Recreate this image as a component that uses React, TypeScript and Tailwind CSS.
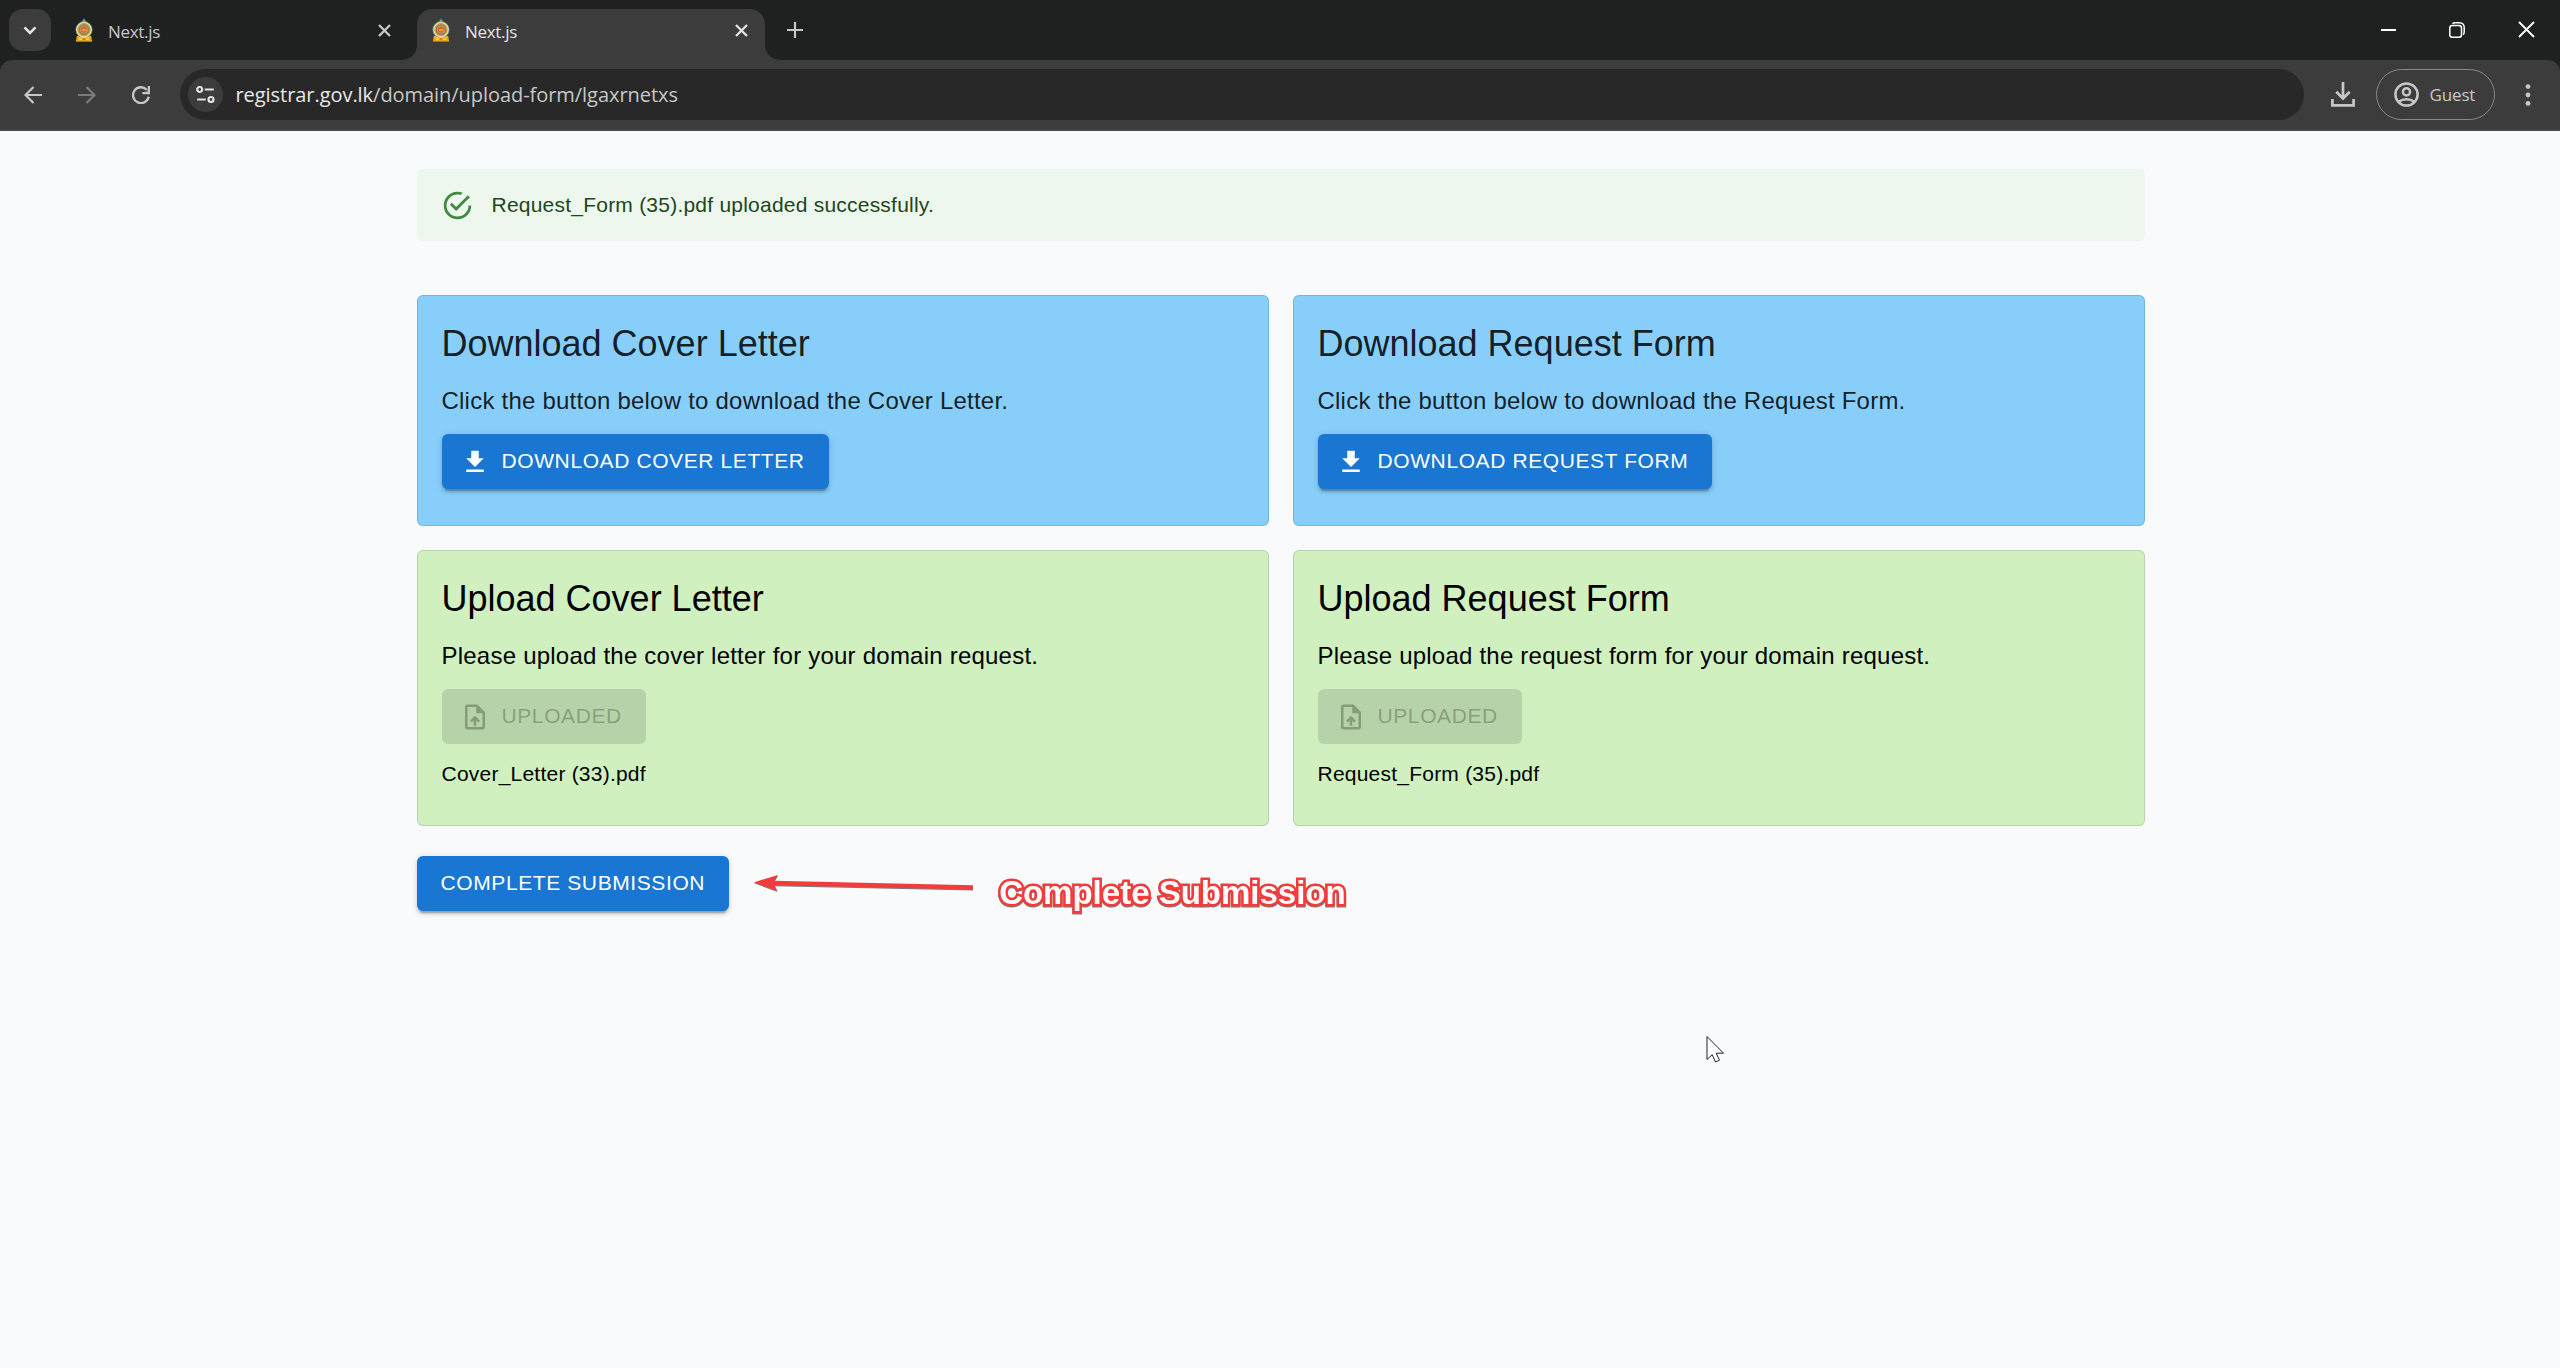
import type { ReactNode } from "react";

function Emblem() {
  return (
    <svg className="h-6 w-[18px] shrink-0" viewBox="0 0 18 24">
      <path d="M9 0.200c1.400 1 2.200 2.200 2.200 4.600H6.800c0-2.400.8-3.600 2.200-4.600z" fill="#3f7472" />
      <rect x="8.200" y="2" width="1.600" height="2" fill="#b9ad62" />
      <path d="M1.800 18h14.400l1 6H.8z" fill="#eda514" />
      <path d="M1 23.500h16" stroke="#5f8480" strokeWidth="1" />
      <circle cx="9" cy="11.700" r="8.200" fill="#ecdfae" stroke="#4f8a8a" strokeWidth="0.700" />
      <circle cx="9" cy="11.700" r="6" fill="#8d8446" stroke="#c9a13a" strokeWidth="1.200" />
      <circle cx="9" cy="11.700" r="3.700" fill="#df5a41" stroke="#b9a58c" strokeWidth="0.800" />
      <path d="M7.200 12.800v-2l1 .5 1-.9.5.9h1.800v2.300h-.9v-1h-1.800v1z" fill="#f2b01e" />
      <path d="M3 19.300l3 .8 3-.8 3 .8 3-.8M4 21.500h3M11 21.500h3" stroke="#f9d879" strokeWidth="0.900" fill="none" />
      <path d="M7.700 20.500h2.600v1.500H7.700z" fill="#d9771e" />
    </svg>
  );
}

function Cross({ color, size, width }: { color: string; size: number; width: number }) {
  return (
    <svg width={size} height={size} viewBox={`0 0 ${size} ${size}`} className="shrink-0">
      <path
        d={`M1 1L${size - 1} ${size - 1}M${size - 1} 1L1 ${size - 1}`}
        stroke={color}
        strokeWidth={width}
        fill="none"
      />
    </svg>
  );
}

function TabStrip() {
  return (
    <div className="flex h-[60px] items-end bg-[#1f2120] font-['Open_Sans',sans-serif]">
      <div className="flex h-[60px] w-[417px] items-center pl-[9px]">
        <div className="flex size-[42px] items-center justify-center rounded-[14px] bg-[#3c3c3c]">
          <svg width="14" height="9" viewBox="0 0 14 9">
            <path d="M1.500 1.300L7 6.800l5.500-5.500" stroke="#e3e3e3" strokeWidth="2.600" fill="none" />
          </svg>
        </div>
        <div className="ml-6 flex">
          <Emblem />
        </div>
        <span className="ml-[15px] mt-1 w-[270px] text-[17px] leading-6 tracking-[-0.3px] text-[#c7c7c7]">Next.js</span>
        <Cross color="#c7c7c7" size={13} width={2.3} />
      </div>
      <div className="relative flex h-[51px] w-[348px] items-center rounded-t-[15px] bg-[#3c3c3c] pb-[9px] pl-[15px]">
        <svg className="absolute bottom-0 -left-[15px]" width="15" height="15" viewBox="0 0 15 15">
          <path d="M15 0v15H0A15 15 0 0 0 15 0z" fill="#3c3c3c" />
        </svg>
        <svg className="absolute -right-[15px] bottom-0" width="15" height="15" viewBox="0 0 15 15">
          <path d="M0 0v15h15A15 15 0 0 1 0 0z" fill="#3c3c3c" />
        </svg>
        <Emblem />
        <span className="ml-[15px] mt-1 w-[270px] text-[17px] leading-6 tracking-[-0.3px] text-[#e3e3e3]">Next.js</span>
        <Cross color="#e3e3e3" size={13} width={2.3} />
      </div>
      <div className="flex h-[60px] grow items-center pl-[22px]">
        <svg width="16" height="16" viewBox="0 0 16 16">
          <path d="M8 0v16M0 8h16" stroke="#c7c7c7" strokeWidth="2.200" />
        </svg>
      </div>
      <div className="flex h-[60px] items-center pr-[25px] pb-[1px]">
        <div className="h-[2px] w-[15px] bg-white" />
        <svg className="ml-[53px]" width="16" height="16" viewBox="0 0 16 16" fill="none" stroke="#fff" strokeWidth="1.500">
          <rect x="0.800" y="3.500" width="11.700" height="11.700" rx="2.500" />
          <path d="M3.500 1.800C4.100 1 4.900.8 6 .8h4.800a4.400 4.400 0 0 1 4.400 4.400V10c0 1.100-.3 2-1.200 2.500" />
        </svg>
        <div className="ml-[53px]">
          <Cross color="#fff" size={17} width={1.8} />
        </div>
      </div>
    </div>
  );
}

function Toolbar() {
  return (
    <div className="h-[71px] bg-[#1f2120] font-['Open_Sans',sans-serif]">
      <div className="flex h-[71px] items-center rounded-t-[12px] border-b-2 border-[#474a4a] bg-[#3c3c3c]">
        <svg className="ml-6" width="18" height="18" viewBox="0 0 18 18" fill="none" stroke="#c7c7c7" strokeWidth="2.200">
          <path d="M18 9H1.800M9.500 1L1.500 9l8 8" />
        </svg>
        <svg className="ml-9" width="18" height="18" viewBox="0 0 18 18" fill="none" stroke="#7b7b7b" strokeWidth="2.200">
          <path d="M0 9h16.200M8.500 1l8 8-8 8" />
        </svg>
        <svg className="ml-9" width="18" height="18" viewBox="0 0 18 18" fill="none">
          <path d="M14.700 3.700A7.900 7.900 0 1 0 16.700 10.800" stroke="#c7c7c7" strokeWidth="2.300" />
          <path d="M16.900 0v7.200h-6.500" stroke="#c7c7c7" strokeWidth="2.200" />
          <path d="M11.500 7.200h5.400V1.700z" fill="#c7c7c7" opacity="0.350" />
        </svg>
        <div className="ml-[30px] flex h-[51px] w-[2124px] items-center rounded-full bg-[#282828] pl-2">
          <div className="flex size-[35px] items-center justify-center rounded-full bg-[#3c3c3c]">
            <svg width="19" height="17" viewBox="0 0 19 17" fill="none" stroke="#e3e3e3" strokeWidth="2.200">
              <circle cx="3.700" cy="3.500" r="2.500" />
              <path d="M8.800 3.500h9M1.200 13.500h8.500" />
              <circle cx="15" cy="13.500" r="2.500" />
            </svg>
          </div>
          <span className="ml-[12.500px] whitespace-pre text-[20px] leading-7 tracking-[-0.05px] text-[#c7c7c7]">
            <span className="text-[#e8e8e8]">registrar.gov.lk</span>/domain/upload-form/lgaxrnetxs
          </span>
        </div>
        <svg className="ml-[27px]" width="24" height="25" viewBox="0 0 24 25" fill="none" stroke="#c7c7c7" strokeWidth="2.700">
          <path d="M12 0v16M5.300 9.800l6.700 6.700 6.700-6.700M1.400 17v6.300h21.200V17" />
        </svg>
        <div className="ml-[21px] flex h-[51px] w-[119px] items-center rounded-full border border-[#8a8a8a] pl-[16.500px]">
          <svg width="25" height="25" viewBox="0 0 25 25" fill="none" stroke="#c7c7c7" strokeWidth="2.500">
            <circle cx="12.500" cy="12.500" r="11.100" />
            <circle cx="12.500" cy="9.900" r="3.600" />
            <path d="M4.500 20c4.500-3.600 11.500-3.600 16 0" />
          </svg>
          <span className="ml-[11px] text-[17px] leading-6 tracking-[-0.15px] text-[#c7c7c7]">Guest</span>
        </div>
        <svg className="ml-[29.500px]" width="6" height="22" viewBox="0 0 6 22" fill="#c7c7c7">
          <circle cx="3" cy="2.600" r="2.400" />
          <circle cx="3" cy="11" r="2.400" />
          <circle cx="3" cy="19.400" r="2.400" />
        </svg>
      </div>
    </div>
  );
}

const BUTTON_SHADOW =
  "shadow-[0_4.5px_1.5px_-3px_rgba(0,0,0,0.2),0_3px_3px_0_rgba(0,0,0,0.14),0_1.5px_7.5px_0_rgba(0,0,0,0.12)]";
const BUTTON = "flex h-[55px] w-fit items-center rounded-[6px] text-[21px] leading-[37px] tracking-[0.6px] whitespace-nowrap uppercase";

function DownloadCard({ title, text, action }: { title: string; text: string; action: string }) {
  return (
    <section className="h-[231px] rounded-[6px] border border-black/12 bg-[#87cefa] p-6 text-black/87">
      <CardText title={title}>{text}</CardText>
      <button className={`${BUTTON} ${BUTTON_SHADOW} mt-[15px] bg-[#1976d2] pr-6 pl-[18px] text-white`}>
        <svg className="mr-3" width="30" height="30" viewBox="0 0 24 24" fill="currentColor">
          <path d="M19 9h-4V3H9v6H5l7 7zM5 18v2h14v-2z" />
        </svg>
        <span className="pb-[2px]">{action}</span>
      </button>
    </section>
  );
}

function UploadCard({ title, text, file }: { title: string; text: string; file: string }) {
  return (
    <section className="h-[276px] rounded-[6px] border border-black/12 bg-[#d0f0c0] p-6 text-black">
      <CardText title={title}>{text}</CardText>
      <button disabled className={`${BUTTON} mt-[15px] bg-black/12 pr-6 pl-[18px] text-black/26`}>
        <svg className="mr-3" width="30" height="30" viewBox="0 0 24 24" fill="currentColor">
          <path d="M14 2H6c-1.100 0-1.990.9-1.990 2L4 20c0 1.100.89 2 1.990 2H18c1.100 0 2-.9 2-2V8zm4 18H6V4h7v5h5zM8 15.010l1.410 1.410L11 14.840V19h2v-4.160l1.590 1.590L16 15.010 12.010 11z" />
        </svg>
        <span className="pb-[2px]">Uploaded</span>
      </button>
      <p className="mt-[15px] text-[21px] leading-[30px] tracking-[0.225px]">{file}</p>
    </section>
  );
}

function CardText({ title, children }: { title: string; children: ReactNode }) {
  return (
    <>
      <h2 className="text-[36px] leading-[48px]">{title}</h2>
      <p className="mt-[15px] text-[24px] leading-9 tracking-[0.225px]">{children}</p>
    </>
  );
}

export default function App() {
  return (
    <div className="relative flex h-[1368px] w-[2560px] flex-col overflow-hidden bg-[#f8fafc] font-['Liberation_Sans',Arial,sans-serif]">
      <TabStrip />
      <Toolbar />
      <main className="ml-[416.500px] w-[1728px] pt-[38px]">
        <div className="flex h-[72px] items-center rounded-[6px] bg-[#edf7ed] px-6 text-[#1e4620]">
          <svg className="mr-[18px] opacity-90" width="33" height="33" viewBox="0 0 24 24" fill="#2e7d32">
            <path d="M20,12A8,8 0 0,1 12,20A8,8 0 0,1 4,12A8,8 0 0,1 12,4C12.76,4 13.5,4.11 14.2,4.31L15.77,2.74C14.61,2.26 13.34,2 12,2A10,10 0 0,0 2,12A10,10 0 0,0 12,22A10,10 0 0,0 22,12M7.91,10.08L6.5,11.5L11,16L21,6L19.59,4.58L11,13.17L7.91,10.08Z" />
          </svg>
          <span className="text-[21px] leading-[30px] tracking-[0.225px]">Request_Form (35).pdf uploaded successfully.</span>
        </div>
        <div className="mt-[54px] grid grid-cols-2 gap-6">
          <DownloadCard
            title="Download Cover Letter"
            text="Click the button below to download the Cover Letter."
            action="Download Cover Letter"
          />
          <DownloadCard
            title="Download Request Form"
            text="Click the button below to download the Request Form."
            action="Download Request Form"
          />
          <UploadCard
            title="Upload Cover Letter"
            text="Please upload the cover letter for your domain request."
            file="Cover_Letter (33).pdf"
          />
          <UploadCard
            title="Upload Request Form"
            text="Please upload the request form for your domain request."
            file="Request_Form (35).pdf"
          />
        </div>
        <div className="mt-[30px] flex items-start">
          <button className={`${BUTTON} ${BUTTON_SHADOW} bg-[#1976d2] px-6 text-white`}>
            <span className="pb-[2px]">Complete Submission</span>
          </button>
          <svg className="mt-[17px] ml-[24px] shrink-0 drop-shadow-[0_1px_0.5px_rgba(0,0,0,0.5)]" width="222" height="22" viewBox="0 0 222 22" fill="#f43b3b">
            <path d="M1 9.300L25 2l-3.500 5.800L220 12.200v4.300L21.500 12.300 24.500 18z" />
          </svg>
          <span className="mt-[18px] ml-[24px] whitespace-nowrap text-[33px] leading-[38px] font-bold text-white drop-shadow-[0_1px_0.5px_rgba(0,0,0,0.5)] [-webkit-text-stroke:5px_#f43b3b] [paint-order:stroke_fill]">
            Complete Submission
          </span>
        </div>
      </main>
      <svg className="absolute top-[1035px] left-[1706px]" width="21" height="30" viewBox="0 0 21 30">
        <path d="M1 1.500v23l5.200-4.800 3.300 7.300 4-1.800-3.300-7h7.300z" fill="#fff" stroke="#23232b" strokeWidth="1" />
      </svg>
    </div>
  );
}
